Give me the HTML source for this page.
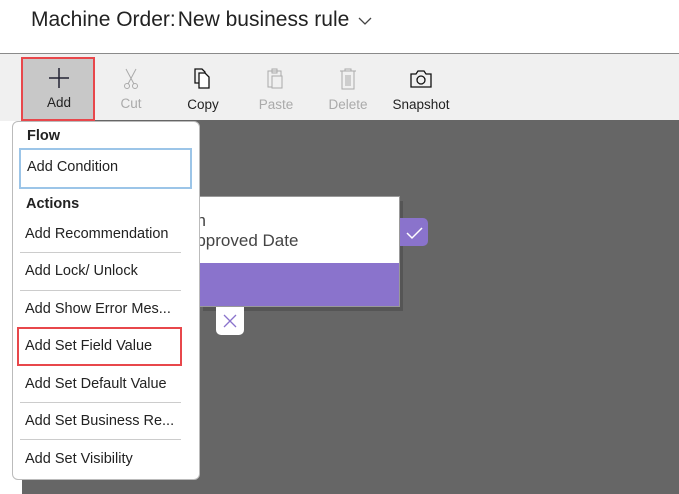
<!DOCTYPE html><html><head><style>
body{margin:0;width:679px;height:494px;overflow:hidden;background:#fff;font-family:"Liberation Sans",sans-serif;position:relative}
.a{position:absolute}
.tb{left:0;top:53px;width:679px;height:67px;background:#f0f0f0;border-top:1px solid #8a8a8a}
.btn{position:absolute;top:100px;font-size:13.5px;width:70px;text-align:center}
.item{position:absolute;left:25px;font-size:14.5px;color:#222}
.sep{position:absolute;left:20px;width:161px;height:1px;background:#ccc}
</style></head><body>
<div class="a" style="left:31px;top:8px;font-size:21px;color:#222">Machine Order:<span style="margin-left:2px">New business rule</span> <svg width="16" height="10" style="margin-left:2px"><path d="M2 2l6 6 6-6" stroke="#444" fill="none" stroke-width="1.3"/></svg></div>
<div class="a tb"></div>
<div class="a" style="left:22px;top:120px;width:657px;height:374px;background:#666"></div>
<div class="a" style="left:23px;top:59px;width:70px;height:60px;background:#c8c8c8;outline:2px solid #e8474b"></div>
<svg class="a" style="left:47px;top:66px" width="24" height="24"><path d="M12 2v20M2 12h20" stroke="#223" stroke-width="1.5"/></svg>
<div class="btn" style="left:24px;top:95px;color:#222">Add</div>
<div class="btn" style="left:96px;top:96px;color:#aaa">Cut</div>
<div class="btn" style="left:168px;top:97px;color:#222">Copy</div>
<div class="btn" style="left:241px;top:97px;color:#aaa">Paste</div>
<div class="btn" style="left:313px;top:97px;color:#aaa">Delete</div>
<div class="btn" style="left:386px;top:97px;color:#222">Snapshot</div>
<svg class="a" style="left:123px;top:68px" width="16" height="22"><g stroke="#aaa" fill="none"><path d="M3 1l8 15M13 1l-8 15"/><circle cx="4" cy="18" r="2.5"/><circle cx="12" cy="18" r="2.5"/></g></svg>
<svg class="a" style="left:193px;top:68px" width="20" height="22"><g stroke="#111" fill="none" stroke-width="1.3"><path d="M2 1h7l3 3v11H2z"/><path d="M6 5h6l4 4v11H6z" fill="#fff"/></g></svg>
<svg class="a" style="left:266px;top:68px" width="20" height="22"><g stroke="#aaa" fill="none"><rect x="2" y="3" width="13" height="16"/><rect x="6" y="8" width="10" height="12" fill="#f0f0f0"/><rect x="6" y="1" width="5" height="4"/></g></svg>
<svg class="a" style="left:339px;top:68px" width="18" height="22"><g stroke="#aaa" fill="none"><path d="M1 3h16M6 3V1h6v2M3 3v18h12V3M7 7v11M9 7v11M11 7v11"/></g></svg>
<svg class="a" style="left:410px;top:70px" width="22" height="18"><g stroke="#111" fill="none" stroke-width="1.3"><path d="M1 4h5l2-3h6l2 3h5v13H1z"/><circle cx="11" cy="10" r="4"/></g></svg>
<div class="a" style="left:203px;top:201px;width:200px;height:110px;background:#555"></div>
<div class="a" style="left:198px;top:196px;width:200px;height:109px;background:#fff;border:1px solid #999"></div>
<div class="a" style="left:199px;top:263px;width:200px;height:43px;background:#8a73cc"></div>
<div class="a" style="left:187px;top:211px;font-size:17px;color:#444">on</div>
<div class="a" style="left:185px;top:231px;font-size:17px;color:#444">Approved Date</div>
<div class="a" style="left:400px;top:218px;width:28px;height:28px;background:#8a73cc;border-radius:0 5px 5px 0"></div>
<svg class="a" style="left:404px;top:222px" width="20" height="20"><path d="M3 11l5 5 10-10" stroke="#fff" fill="none" stroke-width="1.5"/></svg>
<div class="a" style="left:216px;top:307px;width:28px;height:28px;background:#fff;border-radius:0 0 5px 5px"></div>
<svg class="a" style="left:222px;top:313px" width="16" height="16"><path d="M2 2l12 12M14 2L2 14" stroke="#8a73cc" stroke-width="1.3"/></svg>
<div class="a" style="left:12px;top:121px;width:186px;height:357px;background:#fff;border:1px solid #bbb;border-radius:6px"></div>
<div class="item" style="left:27px;top:128px;font-weight:bold">Flow</div>
<div class="a" style="left:19px;top:148px;width:169px;height:37px;border:2px solid #9cc5e8"></div>
<div class="item" style="left:27px;top:159px">Add Condition</div>
<div class="item" style="left:26px;top:196px;font-weight:bold">Actions</div>
<div class="item" style="top:226px">Add Recommendation</div><div class="sep" style="top:252px"></div>
<div class="item" style="top:263px">Add Lock/ Unlock</div><div class="sep" style="top:290px"></div>
<div class="item" style="top:301px">Add Show Error Mes...</div><div class="sep" style="top:327px"></div>
<div class="item" style="top:338px">Add Set Field Value</div><div class="sep" style="top:364px"></div>
<div class="item" style="top:376px">Add Set Default Value</div><div class="sep" style="top:402px"></div>
<div class="item" style="top:413px">Add Set Business Re...</div><div class="sep" style="top:439px"></div>
<div class="item" style="top:451px">Add Set Visibility</div>
<div class="a" style="left:17px;top:327px;width:161px;height:35px;border:2px solid #e8474b"></div>
</body></html>
